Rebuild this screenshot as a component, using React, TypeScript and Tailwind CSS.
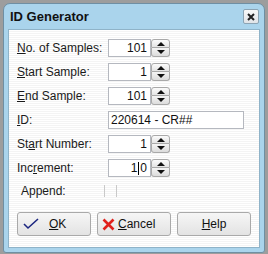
import React from 'react';

const font = { fontFamily: '"Liberation Sans", Arial, sans-serif' };

const Spinner = () => (
  <div className="flex h-[18px] w-[19px] flex-col">
    <div className="flex h-[9px] items-center justify-center rounded-t-[3px] border border-[#a9a9a9] bg-gradient-to-b from-[#fbfbfb] to-[#e4e4e4]">
      <svg width="8" height="4" viewBox="0 0 8 4">
        <path d="M0 4 L4 0 L8 4 Z" fill="#111" />
      </svg>
    </div>
    <div className="flex h-[9px] items-center justify-center rounded-b-[3px] border border-t-0 border-[#a9a9a9] bg-gradient-to-b from-[#f4f4f4] to-[#dcdcdc]">
      <svg width="8" height="4" viewBox="0 0 8 4">
        <path d="M0 0 L4 4 L8 0 Z" fill="#111" />
      </svg>
    </div>
  </div>
);

const Label = ({ children }: { children: React.ReactNode }) => (
  <div className="w-[91px] text-[12px] leading-none text-[#1a1a1a]">{children}</div>
);

const NumberRow = ({ label, value }: { label: React.ReactNode; value: React.ReactNode }) => (
  <div className="flex h-[18px] items-center">
    <Label>{label}</Label>
    <div className="flex h-[18px] w-[43px] items-center justify-end border border-[#b5b8bf] bg-white pr-[3px] text-[12px] text-[#111]">
      {value}
    </div>
    <Spinner />
  </div>
);

export default function App() {
  return (
    <div className="h-[254px] w-[268px] overflow-hidden bg-[#9d9d9d] pl-[3px] pt-[3px]" style={font}>
      <div className="flex h-[250px] w-[262px] flex-col rounded-t-[7px] rounded-b-[3px] border border-[#6f8fa3] bg-[#aad4ec]">
        <div className="flex h-[25px] items-center justify-between pl-[6px] pr-[5px]">
          <span className="text-[13px] font-bold text-[#111]">ID Generator</span>
          <div className="flex h-[15px] w-[16px] items-center justify-center rounded-[2px] border border-[#8ca4b4] bg-gradient-to-b from-[#f8f8f8] to-[#e0e4e8]">
            <svg width="8" height="8" viewBox="0 0 8 8">
              <path d="M1 1 L7 7 M7 1 L1 7" stroke="#222" strokeWidth="2" />
            </svg>
          </div>
        </div>
        <div className="mx-[4px] flex h-[219px] flex-col border border-[#8fb3c8] bg-[repeating-linear-gradient(0deg,#ffffff_0px,#ffffff_1px,#f4f4f4_1px,#f4f4f4_2px)] pl-[8px] pt-[9px]">
          <div className="flex flex-col gap-[6px]">
            <NumberRow label={<><u>N</u>o. of Samples:</>} value="101" />
            <NumberRow label={<><u>S</u>tart Sample:</>} value="1" />
            <NumberRow label={<><u>E</u>nd Sample:</>} value="101" />
            <div className="flex h-[18px] items-center">
              <Label><u>I</u>D:</Label>
              <div className="flex h-[18px] w-[136px] items-center border border-[#b5b8bf] bg-white pl-[2px] text-[12px] text-[#111]">
                220614 - CR##
              </div>
            </div>
            <NumberRow label={<>St<u>a</u>rt Number:</>} value="1" />
            <NumberRow
              label={<>Inc<u>r</u>ement:</>}
              value={
                <>
                  1<span className="mx-[1px] inline-block h-[13px] w-px bg-black" />0
                </>
              }
            />
          </div>
          <div className="mt-[8px] flex h-[12px] items-center">
            <div className="w-[87px] pl-[4px] text-[12px] leading-none text-[#1a1a1a]">Append:</div>
            <div className="h-[12px] w-[13px] border-x border-[#c9c9c9]" />
          </div>
          <div className="mt-[15px] flex gap-[6px]">
            <button className="flex h-[24px] w-[74px] items-center rounded-[3px] border border-[#a9a9a9] bg-gradient-to-b from-[#f6f6f6] to-[#e3e3e3] pl-[5px] text-[12px] text-[#111]">
              <svg width="16" height="12" viewBox="0 0 16 12">
                <path d="M1 6 L5 10 L15 1" stroke="#1c2680" strokeWidth="1.6" fill="none" />
              </svg>
              <span className="ml-[10px]"><u>O</u>K</span>
            </button>
            <button className="flex h-[24px] w-[74px] items-center rounded-[3px] border border-[#a9a9a9] bg-gradient-to-b from-[#f6f6f6] to-[#e3e3e3] pl-[4px] text-[12px] text-[#111]">
              <svg width="13" height="13" viewBox="0 0 13 13">
                <path d="M1.5 1.5 L11.5 11.5 M11.5 1.5 L1.5 11.5" stroke="#e0201b" strokeWidth="2.6" />
              </svg>
              <span className="ml-[3px]"><u>C</u>ancel</span>
            </button>
            <button className="flex h-[24px] w-[74px] items-center justify-center rounded-[3px] border border-[#a9a9a9] bg-gradient-to-b from-[#f6f6f6] to-[#e3e3e3] text-[12px] text-[#111]">
              <span><u>H</u>elp</span>
            </button>
          </div>
        </div>
      </div>
    </div>
  );
}
